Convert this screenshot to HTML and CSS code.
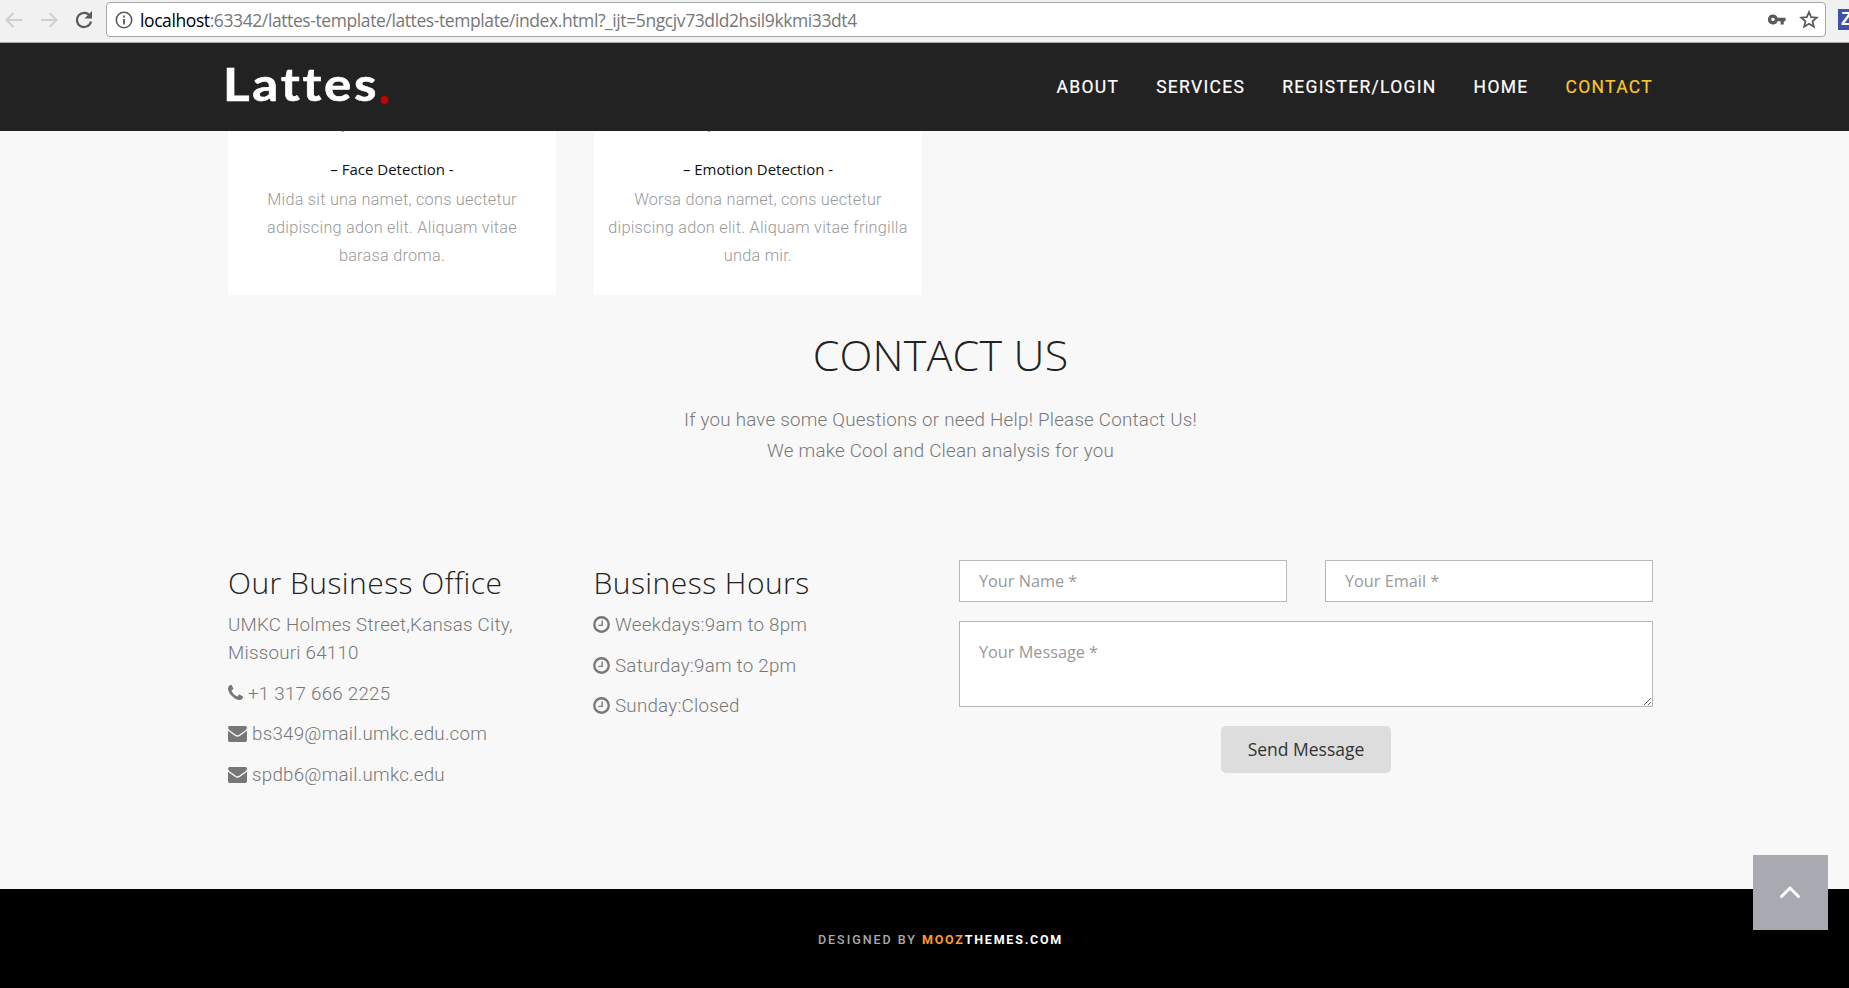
FILE: index.html
```html
<!DOCTYPE html>
<html lang="en">
<head>
<meta charset="utf-8">
<title>Lattes</title>
<link rel="stylesheet" href="styles.css">
</head>
<body>
<svg class="defs" aria-hidden="true">
  <symbol id="clock" viewBox="0 0 16 16"><circle cx="8" cy="8" r="6.8" fill="none" stroke="currentColor" stroke-width="2.2"/><path d="M8.6 4.2V8.8H5.2" fill="none" stroke="currentColor" stroke-width="1.3"/></symbol>
  <symbol id="mail" viewBox="0 0 19 16"><path d="M0 1.6Q0 0 1.6 0H17.4Q19 0 19 1.6Q19 3 17.5 4.2L11.2 8.8Q9.5 9.8 7.8 8.8L1.5 4.2Q0 3 0 1.6ZM0 4.8L7.2 10Q9.5 11.4 11.8 10L19 4.8V14.2Q19 16 17.4 16H1.6Q0 16 0 14.2Z" fill="currentColor"/></symbol>
  <symbol id="phone" viewBox="0 0 1408 1408"><path transform="translate(0 1408) scale(1 -1)" d="M1408 296Q1408 269 1398 225.500Q1388 182 1377 157Q1356 107 1255 51Q1161 0 1069 0Q1042 0 1016.500 3.500Q991 7 959 16Q927 25 911.500 30.500Q896 36 856 51Q816 66 807 69Q709 104 632 152Q504 231 367.500 367.500Q231 504 152 632Q104 709 69 807Q66 816 51 856Q36 896 30.500 911.500Q25 927 16 959Q7 991 3.500 1016.500Q0 1042 0 1069Q0 1161 51 1255Q107 1356 157 1377Q182 1388 225.500 1398Q269 1408 296 1408Q310 1408 317 1405Q335 1399 370 1329Q381 1310 400 1275Q419 1240 435 1211.500Q451 1183 466 1158Q469 1154 483.500 1133Q498 1112 505 1097.500Q512 1083 512 1069Q512 1049 483.500 1019Q455 989 421.500 964Q388 939 359.500 911Q331 883 331 865Q331 856 336 842.500Q341 829 344.500 822Q348 815 358.500 798Q369 781 370 779Q446 642 544 544Q642 446 779 370Q781 369 798 358.500Q815 348 822 344.500Q829 341 842.500 336Q856 331 865 331Q883 331 911 359.500Q939 388 964 421.500Q989 455 1019 483.500Q1049 512 1069 512Q1083 512 1097.500 505Q1112 498 1133 483.500Q1154 469 1158 466Q1183 451 1211.500 435Q1240 419 1275 400Q1310 381 1329 370Q1399 335 1405 317Q1408 310 1408 296Z" fill="currentColor"/></symbol>
</svg>
<div class="chrome">
  <div class="tools">
    <svg width="18" height="18" viewBox="0 0 18 18"><path d="M17 9H2M8.500 2L1.500 9L8.500 16" fill="none" stroke="#cfcfcf" stroke-width="2"/></svg>
    <svg width="18" height="18" viewBox="0 0 18 18"><path d="M1 9H16M9.500 2L16.500 9L9.500 16" fill="none" stroke="#cfcfcf" stroke-width="2"/></svg>
    <svg width="18" height="18" viewBox="0 0 18 18"><path d="M15 5A7.100 7.100 0 1 0 16 10.500" fill="none" stroke="#5a5a5a" stroke-width="2.200"/><path d="M17 0V7.500H9.500Z" fill="#5a5a5a"/></svg>
  </div>
  <div class="address">
    <svg width="18" height="18" viewBox="0 0 18 18"><circle cx="9" cy="9" r="7.700" fill="none" stroke="#5a5a5a" stroke-width="1.600"/><path d="M9 4.500V6.500M9 8V13.500" stroke="#5a5a5a" stroke-width="1.800"/></svg>
    <div class="url"><span>localhost</span>:63342/lattes-template/lattes-template/index.html?_ijt=5ngcjv73dld2hsil9kkmi33dt4</div>
    <svg class="key" width="18" height="11" viewBox="0 0 20 12"><path fill-rule="evenodd" d="M5.500 0.500A5.500 5.500 0 1 0 10.600 8H14V11.500H17.500V8H19.500V4H10.600A5.500 5.500 0 0 0 5.500 .5ZM5.500 4A2 2 0 1 1 5.500 8A2 2 0 0 1 5.500 4Z" fill="#5a5a5a"/></svg>
    <svg width="20" height="19" viewBox="0 0 20 19"><path d="M10 2L12.200 7.200L17.800 7.600L13.500 11.300L14.900 16.800L10 13.800L5.100 16.800L6.500 11.300L2.200 7.600L7.800 7.200Z" fill="none" stroke="#5a5a5a" stroke-width="1.700"/></svg>
  </div>
  <div class="ext">Z</div>
</div>
<header class="header">
  <div class="logo">Lattes<i></i></div>
  <nav class="nav"><a>ABOUT</a><a>SERVICES</a><a>REGISTER/LOGIN</a><a>HOME</a><a class="active">CONTACT</a></nav>
</header>
<main class="main">
  <section class="cards">
    <article class="card"><p class="prev">y</p><h5>– Face Detection -</h5><p>Mida sit una namet, cons uectetur<br>adipiscing adon elit. Aliquam vitae<br>barasa droma.</p></article>
    <article class="card"><p class="prev">y</p><h5>– Emotion Detection -</h5><p>Worsa dona namet, cons uectetur<br>dipiscing adon elit. Aliquam vitae fringilla<br>unda mir.</p></article>
  </section>
  <section class="intro">
    <h2>CONTACT US</h2>
    <p>If you have some Questions or need Help! Please Contact Us!<br>We make Cool and Clean analysis for you</p>
  </section>
  <section class="contact">
    <div class="info">
      <h3>Our Business Office</h3>
      <p>UMKC Holmes Street,Kansas City,<br>Missouri 64110</p>
      <p><svg class="phone"><use href="#phone"/></svg>+1 317 666 2225</p>
      <p><svg class="mail"><use href="#mail"/></svg>bs349@mail.umkc.edu.com</p>
      <p><svg class="mail"><use href="#mail"/></svg>spdb6@mail.umkc.edu</p>
    </div>
    <div class="info">
      <h3>Business Hours</h3>
      <p><svg class="clock"><use href="#clock"/></svg>Weekdays:9am to 8pm</p>
      <p><svg class="clock"><use href="#clock"/></svg>Saturday:9am to 2pm</p>
      <p><svg class="clock"><use href="#clock"/></svg>Sunday:Closed</p>
    </div>
    <form class="form">
      <input class="field" placeholder="Your Name *">
      <input class="field" placeholder="Your Email *">
      <textarea class="field message" placeholder="Your Message *"></textarea>
      <button class="send" type="button">Send Message</button>
    </form>
  </section>
</main>
<footer class="footer">DESIGNED BY&nbsp;<b><em>MOOZ</em>THEMES.COM</b></footer>
<a class="top"><svg width="22" height="14" viewBox="0 0 22 14"><path d="M2.500 11.500L11 3L19.500 11.500" fill="none" stroke="#fff" stroke-width="3" stroke-linecap="round"/></svg></a>
</body>
</html>
```
FILE: styles.css
```css
* { box-sizing: border-box; }
html { overflow: hidden; }
body { margin: 0; width: 1881px; height: 988px; overflow: hidden; background: #f8f8f8; font-family: Roboto, sans-serif; font-weight: 300; color: #777; display: flex; flex-direction: column; }
h2, h3, h5, p { margin: 0; font-weight: 300; }
.defs { position: absolute; width: 0; height: 0; }
.chrome { height: 43px; flex: none; background: #f1f1f1; border-bottom: 1px solid #a9aca9; display: flex; align-items: flex-start; padding-top: 2px; }
.tools { width: 106px; height: 36px; padding-left: 5px; display: flex; align-items: center; gap: 17px; }
.address { width: 1720px; height: 35px; background: #fff; border: 1px solid #a6a6a6; border-radius: 4px; display: flex; align-items: center; padding: 0 6px 0 8px; }
.url { flex: 1; margin-left: 7px; font: 400 17.5px "Open Sans", sans-serif; letter-spacing: -.405px; color: #777; }
.url span { color: #000; }
.key { margin-right: 13px; }
.ext { margin: 7px 0 0 12px; width: 26px; height: 21px; background: #3f51a5; color: #fff; font: 700 18px/20px "Liberation Sans", sans-serif; padding-left: 3px; }
.header { height: 88px; flex: none; background: #222; padding: 0 228px; display: flex; justify-content: space-between; align-items: center; }
.logo { font: 700 46px/56px Lato, sans-serif; color: #fff; letter-spacing: 2.5px; margin: -7px 0 0 -5px; transform: scaleX(1.11); transform-origin: left; -webkit-text-stroke: .6px #fff; }
.logo i { display: inline-block; width: 7px; height: 8px; border-radius: 50%; background: #c80000; margin-left: 1px; vertical-align: -3px; }
.nav { display: flex; gap: 37px; font-weight: 400; font-size: 17.5px; letter-spacing: 1.3px; color: #fff; -webkit-text-stroke: .2px; }
.active { color: #f9c52c; }
.main { flex: none; height: 758px; padding: 0 228px; }
.cards { height: 164px; display: flex; gap: 38px; }
.card { width: 328px; background: #fff; text-align: center; color: #999; font-size: 16.25px; line-height: 28px; letter-spacing: .25px; overflow: hidden; }
.card .prev { margin-top: -21px; padding-right: 94px; }
.card h5 { font: 400 15px/20px "Open Sans", sans-serif; letter-spacing: 0; color: #111; margin: 21px 0 7px; }
.intro { text-align: center; padding-top: 33px; height: 248px; }
.intro h2 { font: 300 43px/54px "Open Sans", sans-serif; color: #222; letter-spacing: .2px; }
.intro p { margin-top: 23px; font-size: 18.75px; line-height: 31px; letter-spacing: .24px; }
.contact { padding-top: 17px; display: grid; grid-template-columns: 328px 328px 694px; column-gap: 37.500px; }
.info h3 { font: 300 30px/40px "Open Sans", sans-serif; color: #222; letter-spacing: .46px; margin-top: 3px; margin-bottom: 8px; }
.info p { font-size: 18.75px; line-height: 28px; margin-bottom: 12.500px; white-space: nowrap; letter-spacing: .24px; }
.info svg { margin-right: 5px; color: #777; }
.info .clock { width: 17px; height: 17px; vertical-align: -2px; margin-left: -.5px; }
.mail { width: 19px; height: 16px; vertical-align: -2px; }
.phone { width: 15px; height: 15px; vertical-align: 0; }
.form { display: grid; grid-template-columns: 328px 328px; gap: 19px 38px; align-content: start; }
.field { width: 100%; height: 42px; border: 1px solid #b8b8b8; border-radius: 0; background: #fff; padding: 0 19px; font: 400 16.25px "Open Sans", sans-serif; }
.field::placeholder { color: #999; opacity: 1; }
.message { grid-column: 1 / 3; height: 86px; padding-top: 19px; display: block; }
.send { grid-column: 1 / 3; justify-self: center; width: 170px; height: 47px; border: 0; border-radius: 5px; background: #ddd; color: #333; font: 400 17.500px "Open Sans", sans-serif; padding-bottom: 3px; }
.footer { flex: 1; background: #000; color: #aaa; display: flex; justify-content: center; align-items: center; font-size: 12.500px; font-weight: 500; letter-spacing: 1.980px; padding-top: 1px; }
.footer b { font-weight: 700; color: #fff; letter-spacing: 1.77px; }
.footer em { font-style: normal; color: #f93; }
.top { position: absolute; left: 1753px; top: 855px; width: 75px; height: 75px; background: #a9a9b1; display: flex; align-items: center; justify-content: center; padding: 0 1px 1px 0; }
```
